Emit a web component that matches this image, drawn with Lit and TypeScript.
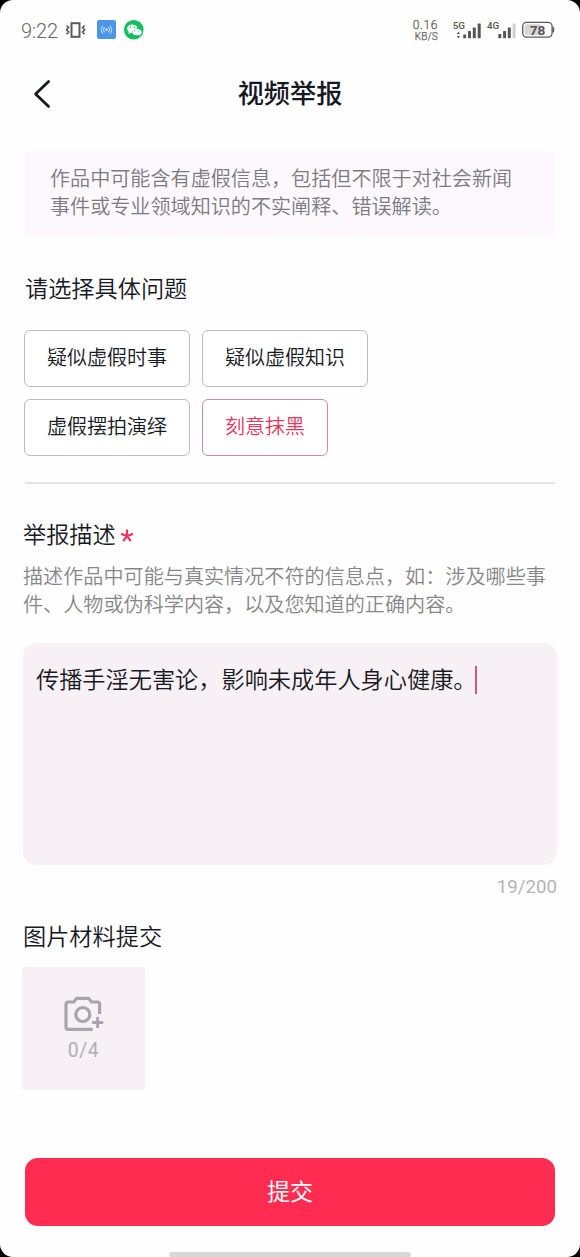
import { LitElement, html, css } from "lit";
import { customElement, property, state } from "lit/decorators.js";
import { classMap } from "lit/directives/class-map.js";

@customElement("status-bar")
class StatusBar extends LitElement {
  static styles = css`
    :host {
      display: flex;
      justify-content: space-between;
      height: 60px;
      padding: 0 25px 0 21px;
      box-sizing: border-box;
      color: #5b5b5b;
      font-family: Roboto, sans-serif;
    }
    .side {
      display: flex;
      align-items: center;
      height: 60px;
    }
    .time {
      font-size: 20px;
      line-height: 24px;
      width: 44px;
      padding-top: 1px;
      letter-spacing: -0.15px;
      color: #666;
    }
    svg {
      display: block;
      flex: none;
    }
    .speed {
      display: flex;
      flex-direction: column;
      align-items: flex-end;
      font-size: 10.5px;
      line-height: 12px;
      width: 40px;
      margin-right: 14px;
      -webkit-text-stroke: 0.25px #5b5b5b;
    }
    .rate {
      font-size: 12px;
      line-height: 12px;
      letter-spacing: 0.6px;
    }
    .unit {
      font-size: 10px;
      line-height: 11px;
      letter-spacing: 0.2px;
    }
    .netlabel {
      font: 500 9.8px Roboto, sans-serif;
      fill: #555;
    }
    .charge {
      font: 700 13.6px Roboto, sans-serif;
      fill: #555;
    }
  `;

  render() {
    return html`
      <div class="side">
        <div class="time">9:22</div>
        <svg width="80" height="24" viewBox="65 18 80 24">
          <g fill="none" stroke="#5b5b5b">
            <rect x="71.5" y="23.2" width="8" height="13.6" stroke-width="2" />
            <path d="M66.6 25.5 L68.6 27.6 L66.6 29.8 L68.6 32 L66.6 34.2M84.6 25.5 L82.6 27.6 L84.6 29.8 L82.6 32 L84.6 34.2" stroke-width="1.7" />
          </g>
          <rect x="97" y="20" width="19" height="19" rx="2" fill="#4c96ea" />
          <circle cx="106.5" cy="29.7" r="1.1" fill="#fff" />
          <g fill="none" stroke="#dcecff" stroke-width="0.9" stroke-linecap="round">
            <path d="M104.2 27.4 Q102.5 29.7 104.2 32M108.8 27.4 Q110.5 29.7 108.8 32M102.4 26 Q99.8 29.7 102.4 33.4M110.6 26 Q113.2 29.7 110.6 33.4" />
          </g>
          <circle cx="133.8" cy="29.7" r="9.8" fill="#10bf5d" />
          <path d="M128.3 34.2 L128.9 32 Q126.6 30.5 127.1 28 Q128.3 24.3 132.6 24.5 Q137 25 137.5 28.4 Q132.5 28.4 131.4 33 Q130.3 33 128.3 34.2Z" fill="#fff" />
          <path d="M136.5 28.9 C143 28.9 143 34 139.6 34.8 L139.8 36 L138.1 35.1 C130.5 36 130.3 29.1 136.5 28.9Z" fill="#fff" />
          <g fill="#10bf5d">
            <circle cx="130.5" cy="27.2" r=".7" /><circle cx="134.2" cy="27.2" r=".7" />
            <circle cx="134.9" cy="31" r=".6" /><circle cx="138.2" cy="31" r=".6" />
          </g>
        </svg>
      </div>
      <div class="side">
        <div class="speed"><div class="rate">0.16</div><div class="unit">KB/S</div></div>
        <svg width="103" height="24" viewBox="452 18 103 24">
          <text class="netlabel" x="452.8" y="28.5">5G</text>
          <path d="M458.4 31.8 l1.7 2.2 h-3.4zM458.4 38.2 l1.7-2.2 h-3.4z" fill="#555" />
          <g fill="#555">
            <rect x="463.2" y="34.5" width="3" height="3.7" rx=".6" />
            <rect x="468" y="31" width="3" height="7.2" rx=".6" />
            <rect x="472.8" y="27.6" width="3" height="10.6" rx=".6" />
            <rect x="477.7" y="23.6" width="3" height="14.6" rx=".6" />
            <rect x="498.3" y="34" width="3" height="4.2" rx=".6" />
            <rect x="503.1" y="31" width="3" height="7.2" rx=".6" />
            <rect x="507.8" y="27.6" width="3" height="10.6" rx=".6" />
          </g>
          <rect x="512.6" y="23.6" width="3" height="14.6" rx=".6" fill="#d0d0d0" />
          <text class="netlabel" x="487" y="28.5">4G</text>
          <path d="M527 24.3 H540.5 V35.3 H527 Q524.5 35.3 524.5 32.8 V26.8 Q524.5 24.3 527 24.3Z" fill="#d6d6d6" />
          <rect x="522.7" y="22.3" width="29.4" height="14.8" rx="4" fill="none" stroke="#5b5b5b" stroke-width="1.3" />
          <rect x="552.4" y="27" width="1.8" height="5.4" rx=".9" fill="#5b5b5b" />
          <text class="charge" x="529.8" y="35">78</text>
        </svg>
      </div>
    `;
  }
}

@customElement("option-chip")
class OptionChip extends LitElement {
  @property() label = "";
  @property({ type: Boolean }) active = false;

  static styles = css`
    :host {
      display: block;
    }
    .chip {
      display: block;
      height: 57px;
      padding: 0 22px 4px;
      border: 1px solid #bdbdc0;
      border-radius: 6px;
      box-sizing: border-box;
      background: #fff;
      color: #161823;
      font: inherit;
      font-size: 20px;
      line-height: 51px;
      white-space: nowrap;
    }
    .active {
      color: #e2385f;
      border-color: #d58a9f;
    }
  `;

  render() {
    return html`<button class=${classMap({ chip: true, active: this.active })}>${this.label}</button>`;
  }
}

@customElement("app-root")
class AppRoot extends LitElement {
  @state() selected = "刻意抹黑";
  private options = ["疑似虚假时事", "疑似虚假知识", "虚假摆拍演绎", "刻意抹黑"];

  static styles = css`
    :host {
      display: block;
      background: #000;
      font-family: "Noto Sans CJK SC", sans-serif;
      font-weight: 350;
      color: #161823;
    }
    .screen {
      display: flex;
      flex-direction: column;
      height: 1257px;
      box-sizing: border-box;
      background: #fefefe;
      border-radius: 13px;
      overflow: hidden;
    }
    .header {
      display: grid;
      grid-template-columns: 60px 1fr 60px;
      align-items: center;
      height: 66px;
    }
    .back {
      display: block;
      margin: 1px 0 0 30px;
    }
    .title {
      margin: 0 0 2px;
      text-align: center;
      font-size: 26.2px;
      line-height: 40px;
      font-weight: 500;
    }
    .notice {
      margin: 25px 25px 0;
      height: 86px;
      padding: 13px 25px 0;
      box-sizing: border-box;
      background: #fdf8fe;
      color: #7b7a7f;
      font-size: 20.1px;
      line-height: 28px;
    }
    .line {
      white-space: nowrap;
    }
    .heading {
      margin: 0;
      font-size: 23.2px;
      line-height: 34px;
      font-weight: inherit;
    }
    .choose {
      margin: 33px 25px 0;
    }
    .chips {
      display: flex;
      flex-wrap: wrap;
      gap: 12px;
      width: 400px;
      margin: 26px 24px 0;
    }
    .divider {
      height: 2px;
      flex: none;
      margin: 26px 25px 0;
      background: #e3e3e5;
    }
    .describe {
      display: flex;
      gap: 3px;
      margin: 32px 23px 0;
    }
    .star {
      display: block;
      margin-top: 12px;
    }
    .hint {
      margin: 12px 23px 0;
      color: #868689;
      font-size: 20.12px;
      line-height: 28px;
    }
    .box {
      display: flex;
      align-items: flex-start;
      gap: 5px;
      height: 222px;
      margin: 25px 23px 0;
      padding: 18px 12px 20px 13px;
      box-sizing: border-box;
      border-radius: 13px;
      background: #f7f1f5;
      font-size: 23.2px;
      line-height: 34px;
      white-space: nowrap;
    }
    .caret {
      width: 2px;
      height: 28px;
      margin-top: 5px;
      margin-left: -7px;
      background: #cf5a7e;
    }
    .counter {
      margin: 9px 23px 0;
      text-align: right;
      color: #b4b4b7;
      font: 400 18.7px/26px Roboto, sans-serif;
    }
    .material {
      margin: 18px 23px 0;
    }
    .upload {
      display: flex;
      flex-direction: column;
      align-items: center;
      width: 123px;
      height: 123px;
      margin: 15px 22px 0;
      padding-top: 29px;
      box-sizing: border-box;
      border-radius: 2px;
      background: #f7f1f5;
      color: #b0aeb3;
      font: 400 19.3px/26px Roboto, sans-serif;
    }
    .count {
      letter-spacing: 0.6px;
      margin-top: 2px;
    }
    .submit {
      display: block;
      height: 68px;
      margin: 68px 25px 0;
      padding: 0 0 4px;
      border: 0;
      border-radius: 13px;
      background: #fe2c51;
      color: #fff;
      font: 400 23px/62px "Noto Sans CJK SC", sans-serif;
    }
    .home {
      width: 242px;
      height: 5px;
      margin: auto auto 0;
      border-radius: 3px 3px 2px 2px;
      background: #d9d7da;
    }
  `;

  render() {
    return html`
      <div class="screen">
        <status-bar></status-bar>
        <div class="header">
          <svg class="back" width="24" height="32" viewBox="0 0 24 32">
            <path d="M18.6 3.6 L5.6 16 L18.6 28.4" fill="none" stroke="#161823" stroke-width="2.8" stroke-linecap="round" stroke-linejoin="round" />
          </svg>
          <h1 class="title">视频举报</h1>
        </div>
        <div class="notice">
          <div class="line">作品中可能含有虚假信息，包括但不限于对社会新闻</div>
          <div class="line">事件或专业领域知识的不实阐释、错误解读。</div>
        </div>
        <h2 class="heading choose">请选择具体问题</h2>
        <div class="chips">
          ${this.options.map(
            (o) => html`<option-chip
              .label=${o}
              .active=${o === this.selected}
              @click=${() => (this.selected = o)}
            ></option-chip>`
          )}
        </div>
        <div class="divider"></div>
        <div class="describe">
          <h2 class="heading">举报描述</h2>
          <svg class="star" width="16" height="16" viewBox="0 0 16 16">
            <path d="M8 8V1.4M8 8L2 5.9M8 8L14 5.9M8 8L4.2 13.2M8 8L11.8 13.2" fill="none" stroke="#e9375f" stroke-width="2.2" />
          </svg>
        </div>
        <div class="hint">
          <div class="line">描述作品中可能与真实情况不符的信息点，如：涉及哪些事</div>
          <div class="line">件、人物或伪科学内容，以及您知道的正确内容。</div>
        </div>
        <div class="box">
          <span>传播手淫无害论，影响未成年人身心健康。</span>
          <span class="caret"></span>
        </div>
        <div class="counter">19/200</div>
        <h2 class="heading material">图片材料提交</h2>
        <div class="upload">
          <svg width="42" height="40" viewBox="62.8 996 42 40">
            <g fill="none" stroke="#a7a5aa" stroke-width="3.2" stroke-linejoin="round">
              <path d="M92.5 1029.3 H68 Q65.8 1029.3 65.8 1027 V1004.2 Q65.8 1002 68 1002 H73.5 L76.3 998.4 H88.5 L91.3 1002 H97.2 Q99.4 1002 99.4 1004.2 V1014" />
              <circle cx="82.6" cy="1014.5" r="7" />
              <path d="M97.4 1017 V1028 M92 1022.5 H103" stroke-width="2.8" />
            </g>
          </svg>
          <div class="count">0/4</div>
        </div>
        <button class="submit">提交</button>
        <div class="home"></div>
      </div>
    `;
  }
}
